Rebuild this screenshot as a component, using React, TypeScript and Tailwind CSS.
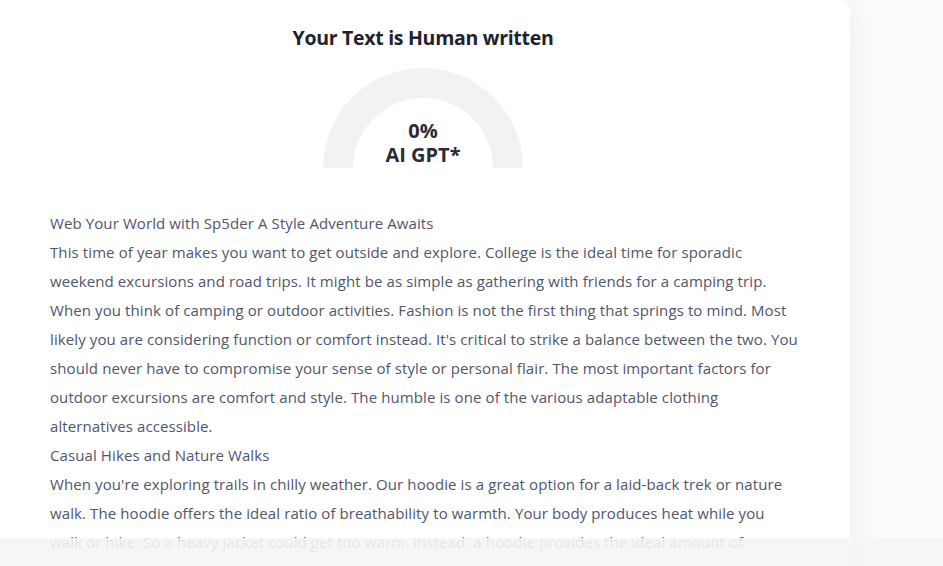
const lines = [
  "Web Your World with Sp5der A Style Adventure Awaits",
  "This time of year makes you want to get outside and explore. College is the ideal time for sporadic",
  "weekend excursions and road trips. It might be as simple as gathering with friends for a camping trip.",
  "When you think of camping or outdoor activities. Fashion is not the first thing that springs to mind. Most",
  "likely you are considering function or comfort instead. It's critical to strike a balance between the two. You",
  "should never have to compromise your sense of style or personal flair. The most important factors for",
  "outdoor excursions are comfort and style. The humble is one of the various adaptable clothing",
  "alternatives accessible.",
  "Casual Hikes and Nature Walks",
  "When you're exploring trails in chilly weather. Our hoodie is a great option for a laid-back trek or nature",
  "walk. The hoodie offers the ideal ratio of breathability to warmth. Your body produces heat while you",
  "walk or hike. So a heavy jacket could get too warm. instead, a hoodie provides the ideal amount of",
];

function Gauge() {
  return (
    <div className="w-[200px] h-[100px] rounded-t-[100px] bg-[#f2f2f2] flex items-end justify-center">
      <div className="w-[140px] h-[70px] rounded-t-[70px] bg-white flex flex-col items-center justify-end pb-[1px] text-[20px] leading-[24px] font-bold text-[#2b2b38]">
        <span>0%</span>
        <span>AI GPT*</span>
      </div>
    </div>
  );
}

export default function App() {
  return (
    <div
      className="h-screen bg-[#fcfcfd] overflow-hidden"
      style={{ fontFamily: '"Open Sans", "Noto Sans", sans-serif' }}
    >
      <div className="w-[850px] bg-white rounded-tr-xl shadow-[0_0_40px_rgba(30,30,60,0.07)] pt-[24px] pb-[60px] pl-[50px] pr-[54px]">
        <h2 className="text-center text-[19.5px] leading-[28px] font-bold text-[#22222e] tracking-[-0.3px]">
          Your Text is Human written
        </h2>
        <div className="flex justify-center mt-[16px]">
          <Gauge />
        </div>
        <div className="mt-[41px] text-[15px] leading-[29px] text-[#50566b] tracking-[0.1px]">
          {lines.map((l, i) => (
            <div key={i} className="whitespace-nowrap">
              {l}
            </div>
          ))}
        </div>
      </div>
      <div className="fixed left-0 right-0 bottom-0 h-[28px] bg-[#f5f5f6]/90" />
    </div>
  );
}
